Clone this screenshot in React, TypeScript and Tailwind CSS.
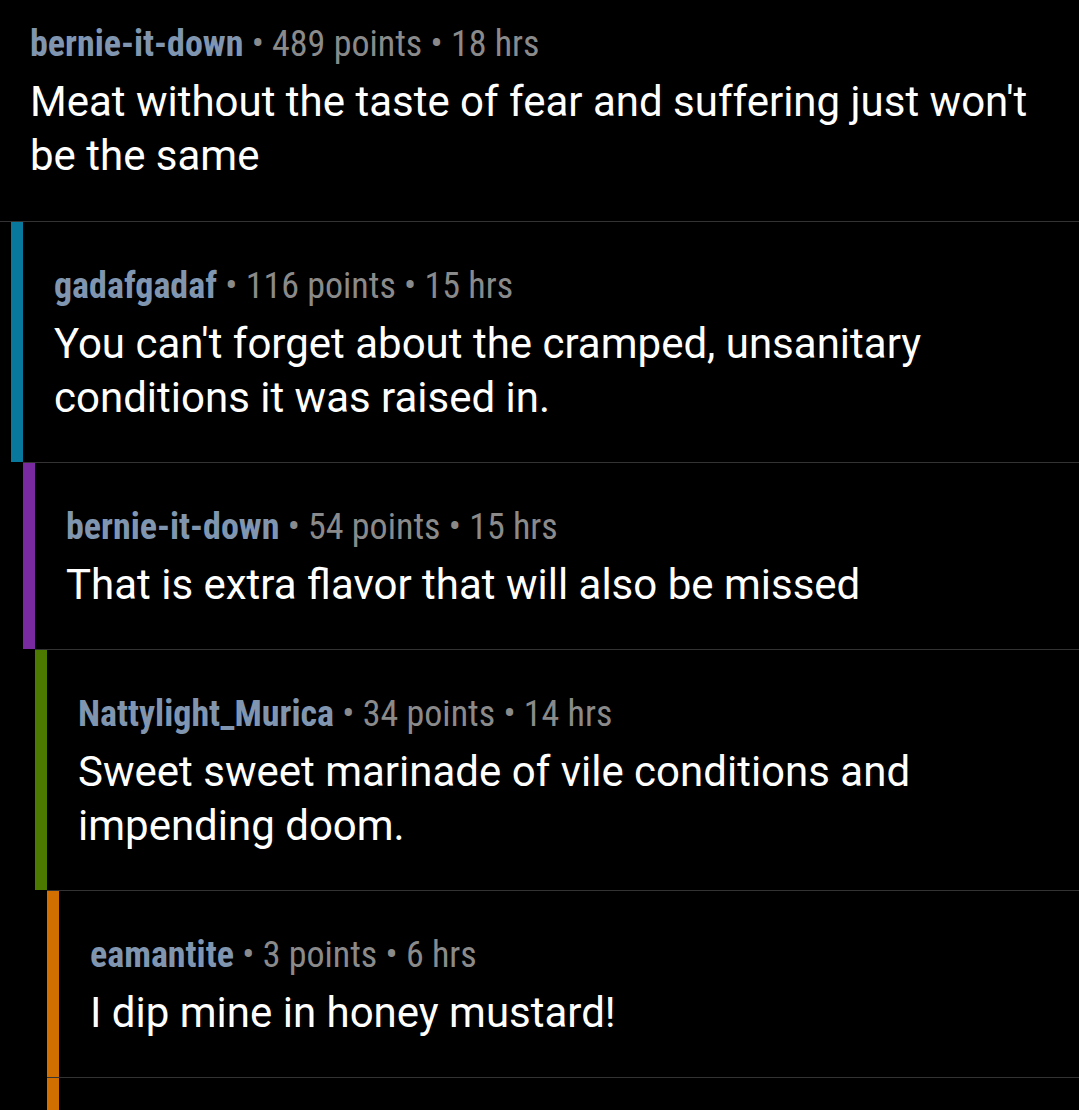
const comments = [
  {
    user: 'bernie-it-down',
    points: 489,
    age: '18 hrs',
    body: "Meat without the taste of fear and suffering just won't be the same",
    depth: 0,
  },
  {
    user: 'gadafgadaf',
    points: 116,
    age: '15 hrs',
    body: "You can't forget about the cramped, unsanitary conditions it was raised in.",
    depth: 1,
  },
  {
    user: 'bernie-it-down',
    points: 54,
    age: '15 hrs',
    body: 'That is extra flavor that will also be missed',
    depth: 2,
  },
  {
    user: 'Nattylight_Murica',
    points: 34,
    age: '14 hrs',
    body: 'Sweet sweet marinade of vile conditions and impending doom.',
    depth: 3,
  },
  {
    user: 'eamantite',
    points: 3,
    age: '6 hrs',
    body: 'I dip mine in honey mustard!',
    depth: 4,
  },
]

// indent + bar colour per depth
const indent = ['ml-0', 'ml-[11px]', 'ml-[23px]', 'ml-[35px]', 'ml-[47px]']
const barColor = ['', 'bg-[#08799c]', 'bg-[#7a2aa1]', 'bg-[#4c7a00]', 'bg-[#d16f00]']

const headFont = {
  fontFamily: "'Roboto Condensed', 'Liberation Sans Narrow', 'DejaVu Sans Condensed', Roboto, sans-serif",
}

const Comment = ({ c, first }: { c: (typeof comments)[number]; first: boolean }) => {
  return (
    <div
      className={`flex ${indent[c.depth]} ${
        c.depth === 0 ? 'border-b border-[#333333]' : c.depth === 1 ? '' : 'border-t border-[#333333]'
      }`}
    >
      {c.depth > 0 && <div className={`w-[12px] shrink-0 ${barColor[c.depth]}`}></div>}
      <div
        className={`flex-1 pr-[30px] ${c.depth > 0 ? 'pl-[31px]' : 'pl-[30px]'} ${
          first ? 'pt-[24px] pb-[38px]' : 'pt-[44px] pb-[37px]'
        }`}
      >
        <div className="text-[36px] leading-[40px] [font-stretch:condensed] whitespace-nowrap" style={headFont}>
          <span className="font-bold text-[#8096b0]">{c.user}</span>
          <span className="text-[#8a8a8a]">
            {' '}• {c.points} points • {c.age}
          </span>
        </div>
        <p className="mt-[11px] text-[42px] leading-[54px] text-white font-['Roboto',sans-serif]">{c.body}</p>
      </div>
    </div>
  )
}

const App = () => {
  return (
    <div className="w-[1079px] h-[1110px] overflow-hidden bg-black">
      {comments.map((c, i) => (
        <Comment key={i} c={c} first={i === 0} />
      ))}
      {/* next reply, only its bar shows */}
      <div className="flex ml-[47px] h-[40px] border-t border-[#333333]">
        <div className="w-[12px] bg-[#d16f00]"></div>
      </div>
    </div>
  )
}

export default App
